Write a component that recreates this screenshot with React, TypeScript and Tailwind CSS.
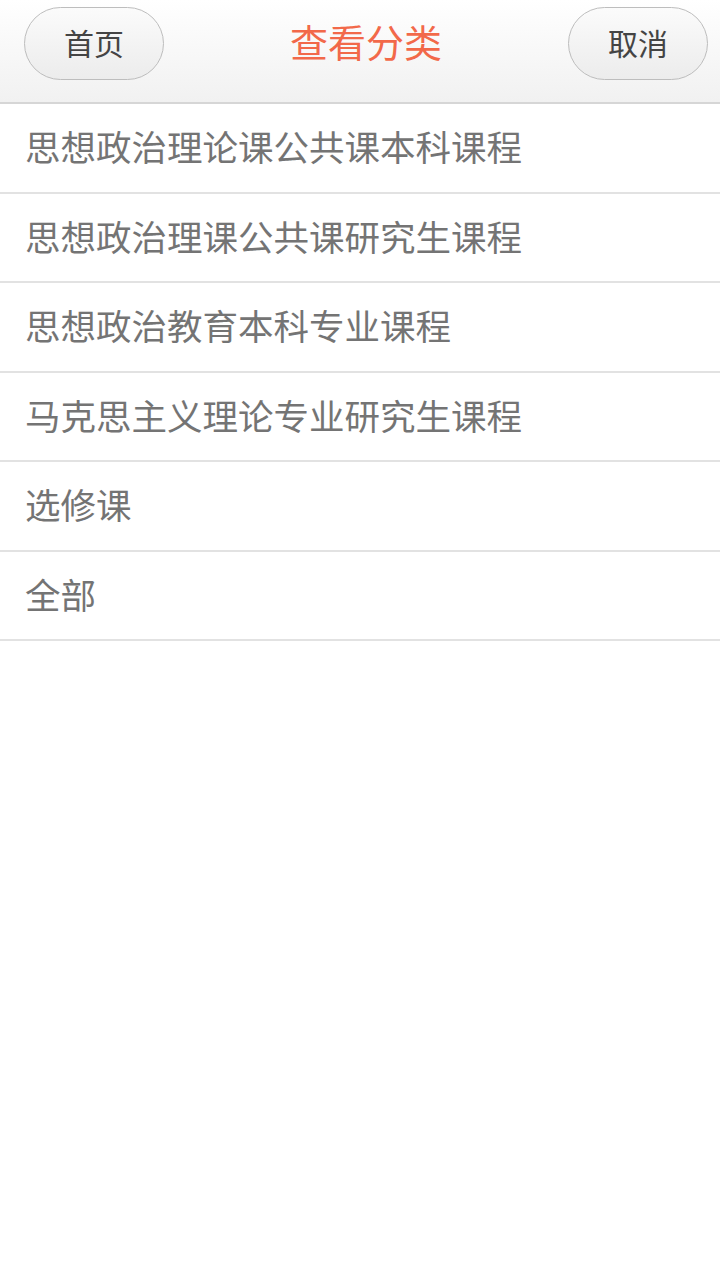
export default function App() {
  const items = [
    "思想政治理论课公共课本科课程",
    "思想政治理课公共课研究生课程",
    "思想政治教育本科专业课程",
    "马克思主义理论专业研究生课程",
    "选修课",
    "全部",
  ];
  const font = { fontFamily: '"Noto Sans CJK SC", "Noto Sans", sans-serif' };
  return (
    <div className="w-[720px] h-[1280px] bg-white" style={font}>
      <div className="h-[104px] flex items-start justify-between pl-[24px] pr-[12px] pt-[7px] bg-gradient-to-b from-white to-[#f1f1f1] border-b-2 border-[#d6d6d6] relative">
        <button className="w-[140px] h-[73px] pb-[4px] rounded-full border border-[#bdbdbd] bg-gradient-to-b from-[#fbfbfb] to-[#ececec] text-[30px] text-[#444] flex items-center justify-center leading-none">
          首页
        </button>
        <div className="absolute left-0 right-0 top-[7px] h-[73px] pb-[6px] flex items-center justify-center pointer-events-none">
          <span className="text-[38px] text-[#f2694a] leading-none pl-[12px]">查看分类</span>
        </div>
        <button className="w-[140px] h-[73px] pb-[4px] rounded-full border border-[#bdbdbd] bg-gradient-to-b from-[#fbfbfb] to-[#ececec] text-[30px] text-[#444] flex items-center justify-center leading-none">
          取消
        </button>
      </div>
      <div>
        {items.map((t) => (
          <div
            key={t}
            className="h-[89.5px] pb-[4px] border-b-2 border-[#e2e2e2] flex items-center pl-[25px] text-[35.5px] text-[#747474] leading-none"
          >
            {t}
          </div>
        ))}
      </div>
    </div>
  );
}
